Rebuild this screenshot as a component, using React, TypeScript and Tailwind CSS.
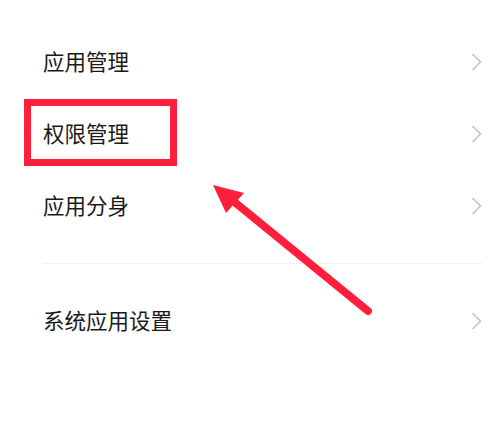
import React from "react";

const Chevron = () => (
  <svg width="12" height="18" viewBox="0 0 12 18" fill="none">
    <path d="M2 1.5 L9.5 9 L2 16.5" stroke="#c4c4c4" strokeWidth="1.6" strokeLinecap="round" strokeLinejoin="round" />
  </svg>
);

const Row = ({ label }: { label: string }) => (
  <div className="flex h-[72px] items-center justify-between pl-[43px] pr-[17px]">
    <span className="mb-[5px] text-[21.5px] leading-none text-[#1a1a1a]">{label}</span>
    <div className="mb-[2px]">
      <Chevron />
    </div>
  </div>
);

export default function App() {
  return (
    <div
      className="relative h-[421px] w-[500px] overflow-hidden bg-white"
      style={{ fontFamily: '"Noto Sans CJK SC", "Noto Sans", sans-serif' }}
    >
      <div className="pt-[27px]">
        <Row label="应用管理" />
        <Row label="权限管理" />
        <Row label="应用分身" />
        <div className="ml-[43px] mr-[17px] mt-5 h-px bg-[#f2f2f2]" />
        <div className="mt-[22px]">
          <Row label="系统应用设置" />
        </div>
      </div>

      <div className="absolute left-[24px] top-[99px] h-[67px] w-[153px] border-[7px] border-[#ff1f3d]" />

      <svg className="absolute left-0 top-0" width="500" height="421" viewBox="0 0 500 421">
        <line x1="232" y1="200" x2="368" y2="311" stroke="#ff1f3d" strokeWidth="8" strokeLinecap="round" />
        <polygon points="213,185 244,193 226,213" fill="#ff1f3d" />
      </svg>
    </div>
  );
}
